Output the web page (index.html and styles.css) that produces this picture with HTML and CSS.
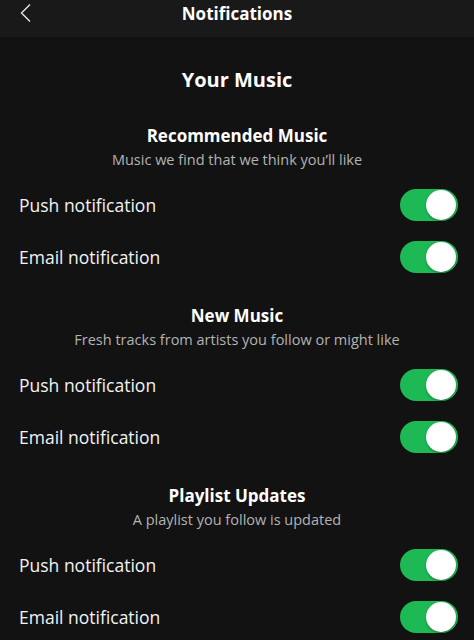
FILE: index.html
```html
<!DOCTYPE html>
<html>
<head>
<meta charset="utf-8">
<link rel="stylesheet" href="styles.css">
</head>
<body>
<header class="topbar">
  <svg class="back" width="14" height="20" viewBox="0 0 14 20"><path d="M11 1.5 L2.5 10 L11 18.5" fill="none" stroke="#e6e6e6" stroke-width="1.4"/></svg>
  <div class="topbar-title">Notifications</div>
</header>
<main class="content">
  <h1 class="page-title">Your Music</h1>

  <section class="group">
    <h2 class="group-title">Recommended Music</h2>
    <p class="group-sub">Music we find that we think you’ll like</p>
    <div class="row"><span class="label">Push notification</span><span class="toggle"><span class="knob"></span></span></div>
    <div class="row"><span class="label">Email notification</span><span class="toggle"><span class="knob"></span></span></div>
  </section>

  <section class="group">
    <h2 class="group-title">New Music</h2>
    <p class="group-sub">Fresh tracks from artists you follow or might like</p>
    <div class="row"><span class="label">Push notification</span><span class="toggle"><span class="knob"></span></span></div>
    <div class="row"><span class="label">Email notification</span><span class="toggle"><span class="knob"></span></span></div>
  </section>

  <section class="group">
    <h2 class="group-title">Playlist Updates</h2>
    <p class="group-sub">A playlist you follow is updated</p>
    <div class="row"><span class="label">Push notification</span><span class="toggle"><span class="knob"></span></span></div>
    <div class="row"><span class="label">Email notification</span><span class="toggle"><span class="knob"></span></span></div>
  </section>
</main>
</body>
</html>
```

FILE: styles.css
```css
* { box-sizing: border-box; }
html, body { margin: 0; padding: 0; }
body {
  background: #121212;
  color: #ffffff;
  font-family: "Open Sans", "Noto Sans", sans-serif;
  width: 474px;
  height: 640px;
  overflow: hidden;
}
.topbar {
  position: relative;
  height: 37px;
  background: #191919;
  display: flex;
  align-items: center;
  justify-content: center;
}
.back {
  position: absolute;
  left: 19px;
  top: 3px;
}
.topbar-title {
  font-size: 17px;
  font-weight: 700;
  line-height: 22px;
  margin-top: -9px;
}
.content {
  padding: 31px 0 0 0;
}
.page-title {
  margin: 0 0 33px 0;
  text-align: center;
  font-size: 20px;
  line-height: 24px;
  font-weight: 700;
}
.group {
  margin-bottom: 22px;
}
.group-title {
  margin: 0;
  text-align: center;
  font-size: 17px;
  line-height: 22px;
  font-weight: 700;
}
.group-sub {
  margin: 3px 0 9px 0;
  text-align: center;
  font-size: 14.5px;
  line-height: 20px;
  color: #b3b3b3;
}
.row {
  height: 52px;
  display: flex;
  align-items: center;
  justify-content: space-between;
  padding: 0 16px 0 19px;
}
.label {
  font-size: 17.5px;
  color: #f2f2f2;
}
.toggle {
  width: 58px;
  height: 32px;
  border-radius: 16px;
  background: #1db954;
  display: flex;
  align-items: center;
  justify-content: flex-end;
  padding-right: 2px;
}
.knob {
  width: 30px;
  height: 30px;
  border-radius: 50%;
  background: #ffffff;
  box-shadow: 0 1px 2px rgba(0,0,0,0.35);
}
```
